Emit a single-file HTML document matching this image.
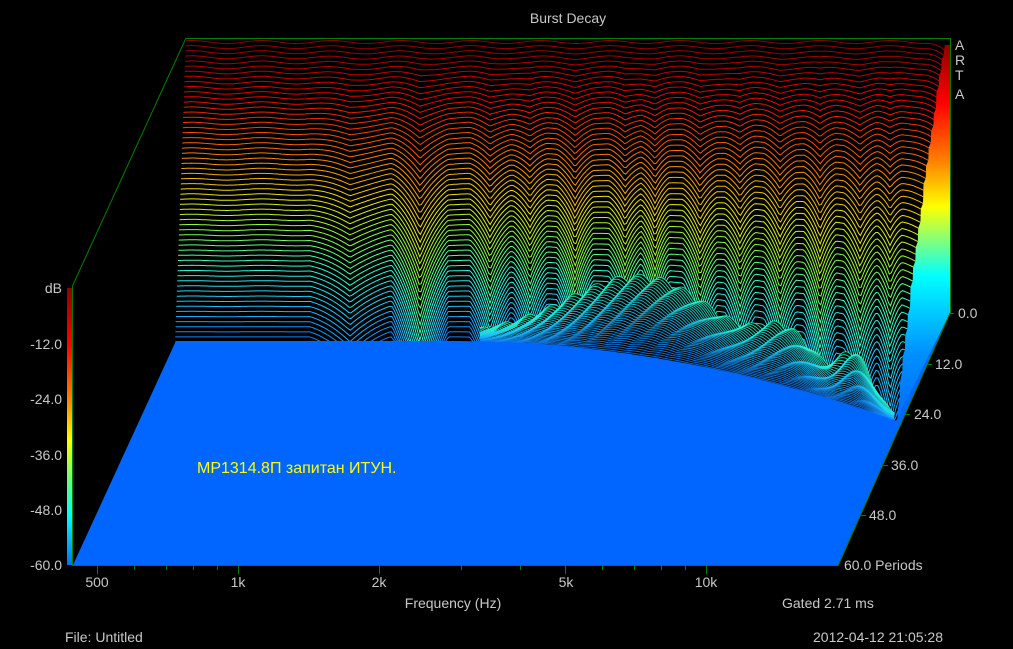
<!DOCTYPE html>
<html><head><meta charset="utf-8">
<style>
html,body{margin:0;padding:0;background:#000;}
body{width:1013px;height:649px;overflow:hidden;position:relative;font-family:"Liberation Sans","DejaVu Sans",sans-serif;}
svg{position:absolute;left:0;top:0;}
svg text{font-family:"Liberation Sans","DejaVu Sans",sans-serif;}
</style></head><body>
<svg id="s" width="1013" height="649" xmlns="http://www.w3.org/2000/svg">
<defs>
<linearGradient id="cb" x1="0" y1="0" x2="0" y2="1">
<stop offset="0" stop-color="#900000"/><stop offset="0.2" stop-color="#ff0000"/>
<stop offset="0.4" stop-color="#ff8000"/><stop offset="0.55" stop-color="#ffff00"/>
<stop offset="0.7" stop-color="#60ff80"/><stop offset="0.82" stop-color="#00ffff"/>
<stop offset="1" stop-color="#0070ff"/></linearGradient>
<linearGradient id="side" gradientUnits="userSpaceOnUse" x1="0" y1="45" x2="0" y2="430">
<stop offset="0" stop-color="#900000"/><stop offset="0.15" stop-color="#ff0000"/>
<stop offset="0.3" stop-color="#ff8000"/><stop offset="0.42" stop-color="#ffff00"/>
<stop offset="0.6" stop-color="#00ffff"/><stop offset="0.8" stop-color="#0090ff"/>
<stop offset="1" stop-color="#0066ff"/></linearGradient>
</defs>
<g id="lines"></g>
<g id="floor"></g>
<g stroke="#008000" stroke-width="1" fill="none">
<line x1="186" y1="38.5" x2="950" y2="38.5"/>
<line x1="186" y1="38" x2="72" y2="287"/>
<line x1="950.5" y1="38" x2="950.5" y2="313"/>
<line x1="950" y1="313" x2="838" y2="566"/>
<line x1="72.5" y1="287" x2="72.5" y2="566"/>
<line x1="72" y1="565.5" x2="838" y2="565.5"/>
</g>
<rect x="67" y="288" width="5" height="277" fill="url(#cb)"/>
<g id="ticks" stroke="#008000" stroke-width="1"></g>
<g fill="#c8c8c8" font-size="14">
<text x="568" y="23" text-anchor="middle">Burst Decay</text>
<text x="62" y="293" text-anchor="end">dB</text>
<text x="62" y="349" text-anchor="end">-12.0</text>
<text x="62" y="404" text-anchor="end">-24.0</text>
<text x="62" y="460" text-anchor="end">-36.0</text>
<text x="62" y="515" text-anchor="end">-48.0</text>
<text x="62" y="570" text-anchor="end">-60.0</text>
<text x="97" y="587" text-anchor="middle">500</text>
<text x="238" y="587" text-anchor="middle">1k</text>
<text x="379" y="587" text-anchor="middle">2k</text>
<text x="566" y="587" text-anchor="middle">5k</text>
<text x="706" y="587" text-anchor="middle">10k</text>
<text x="453" y="608" text-anchor="middle">Frequency (Hz)</text>
<text x="782" y="608">Gated 2.71 ms</text>
<text x="65" y="642">File: Untitled</text>
<text x="813" y="642">2012-04-12  21:05:28</text>
<text x="958" y="318">0.0</text>
<text x="935" y="369">12.0</text>
<text x="914" y="419">24.0</text>
<text x="891" y="470">36.0</text>
<text x="869" y="520">48.0</text>
<text x="844" y="570">60.0 Periods</text>
<text x="955" y="50">A</text><text x="955" y="65">R</text><text x="955" y="80">T</text><text x="955" y="99">A</text>
</g>
<text x="197" y="473" fill="#ffff00" font-size="16">MP1314.8П запитан ИТУН.</text>
</svg>
<script>
(function(){
var NS="http://www.w3.org/2000/svg";
function el(n,a,p){var e=document.createElementNS(NS,n);for(var k in a)e.setAttribute(k,a[k]);p.appendChild(e);return e;}
var lg=document.getElementById('lines'),fg=document.getElementById('floor'),tg=document.getElementById('ticks');
var stops=[[0,[140,0,0]],[0.18,[230,0,0]],[0.36,[255,110,0]],[0.52,[235,235,0]],[0.63,[130,255,60]],[0.75,[40,255,210]],[0.88,[30,190,255]],[1,[16,120,255]]];
function col(t){for(var i=1;i<stops.length;i++){if(t<=stops[i][0]){var a=stops[i-1],b=stops[i],u=(t-a[0])/(b[0]-a[0]);var c=a[1].map(function(v,j){return Math.round(v+(b[1][j]-v)*u)});return 'rgb('+c+')';}}return 'rgb(16,120,255)';}
var dips=[[350,40,28,1.2],[420,28,120,1.6],[490,20,70,1.6],[530,17,60,1.6],[575,18,85,1.6],[625,16,65,1.6],[655,14,70,1.6],[700,17,75,1.6],[740,15,60,1.6],[780,16,70,1.6],[820,16,85,1.6],[860,16,70,1.6],[890,12,50,1.6]];
function droop(x,t){var d=Math.max(0,x-450);return t*t*Math.min(88,d*d/(370*370)*55);}
function floorY(x){return 342+droop(x,1);}
var N=60,paths=[];
function lineY(x,t){
 var y=42+300*t+droop(x,t);
 y+=Math.sin(x*0.09)*1.5*(1-t);
 for(var i=0;i<dips.length;i++){var d=dips[i],u=(x-d[0])/d[1];var w=Math.max(0,1-Math.abs(u));y+=d[2]*Math.pow(t,d[3])*w*(0.5+0.5*w);}
 return Math.min(y,floorY(x));}
var ends=[];
for(var i=0;i<N;i++){
 var t=i/(N-1),x0=186-11*t,x1=945-48*t,pts=[];
 for(var x=x0;x<=x1;x+=2){var y=lineY(x,t);var r=x1-x;if(r<18){y+=(18-r)*(18-r)/18*(1-t)*0.5;}pts.push([x,Math.min(y,floorY(x))]);}
 ends.push(pts[pts.length-1]);
 var d='M'+pts.map(function(p){return p[0].toFixed(1)+','+p[1].toFixed(1)}).join('L');
 el('path',{d:d+'L'+pts[pts.length-1][0].toFixed(1)+',560L'+x0.toFixed(1)+',560Z',fill:'#000'},lg);
 el('path',{d:d,fill:'none',stroke:col(t),'stroke-width':1},lg);
 paths.push(pts);
}
var M=36;
for(var j=0;j<M;j++){
 var u=j/(M-1),pts=[];
 for(var x=480;x<=895;x+=2){
  var h=(Math.exp(-Math.pow((x-650)/110,2))*75+Math.exp(-Math.pow((x-790)/40,2))*40+Math.exp(-Math.pow((x-855)/22,2))*45)*(1-u);
  h+=Math.abs(Math.sin(x*0.14+j*0.3))*8*(1-u);
  var y=floorY(x)-h;
  pts.push([x,y]);}
 var d='M'+pts.map(function(p){return p[0].toFixed(1)+','+p[1].toFixed(1)}).join('L');
 if(j==0)el('path',{d:d+'L895,560L480,560Z',fill:'#000'},lg);
 el('path',{d:d,fill:'none',stroke:col(0.74+0.26*u),'stroke-width':1,opacity:0.8},lg);
}
var sp='M945,45'; for(var i=0;i<ends.length;i++)sp+='L'+ends[i][0].toFixed(1)+','+ends[i][1].toFixed(1);
sp+='L950,313L950,45Z';
el('path',{d:sp,fill:'url(#side)'},fg);
var fd='M73,565L175,343';
for(var x=176;x<=897;x+=3)fd+='L'+x+','+(floorY(x)-1).toFixed(1);
fd+='L950,313L838,565Z';
el('path',{d:fd,fill:'#0066ff'},fg);
function fx(f){return 238+468*Math.log(f/1000)/Math.LN10;}
var fr=[500,600,700,800,900,1000,2000,3000,4000,5000,6000,7000,8000,9000,10000];
fr.forEach(function(f){var x=Math.round(fx(f))+0.5;var big=(f==500||f==1000||f==2000||f==5000||f==10000);el('line',{x1:x,y1:565,x2:x,y2:big?574:570},tg);});
[[949,313],[927,364],[905,414],[883,465],[861,515]].forEach(function(p){el('line',{x1:p[0],y1:p[1]+0.5,x2:p[0]+5,y2:p[1]+0.5},tg);});
})();
</script>
</body></html>
